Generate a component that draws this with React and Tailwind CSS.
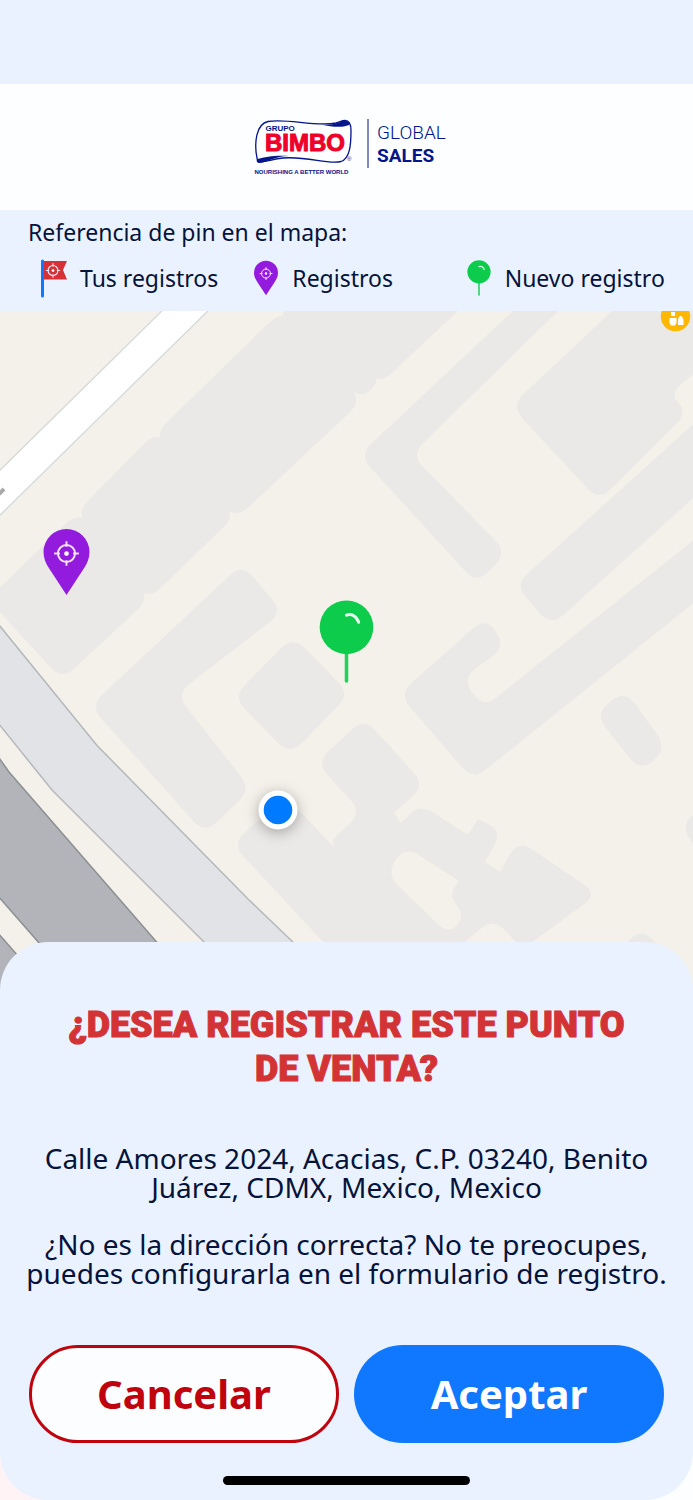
import React from 'react';

// Each corner is [x, y] or [x, y, radius]
const buildings = [
  [[281, 311], [154, 435], [236, 519], [362, 401], [300, 330]],
  [[276, 319], [300, 295], [475, 295], [379, 385], [345, 350], [310, 352]],
  [[300, 340], [361, 400], [382, 378], [330, 320]],
  [[157, 431], [76, 513], [148, 600], [236, 515]],
  [[79, 511], [-12, 599], [62, 680], [150, 598]],
  [[242, 564], [283, 612], [176, 694], [251, 789], [205, 834], [90, 706]],
  [[293, 636], [350, 694], [290, 755], [233, 697]],
  [[513, 311, 0], [359, 455], [477, 584], [507, 552], [411, 455], [558, 311, 0]],
  [[612, 311, 0], [511, 406], [599, 501], [688, 412], [669, 394], [700, 369, 0], [700, 300, 0]],
  [[700, 418, 0], [515, 585], [551, 626], [700, 492, 0]],
  [[700, 535, 0], [483, 708], [462, 678], [506, 647], [486, 617], [399, 694], [473, 780], [700, 598, 0]],
  [[625, 690], [667, 748], [641, 772], [595, 714]],
  [[700, 809, 0], [681, 826], [700, 854, 0]],
  [[641, 928], [662, 950, 0], [620, 950, 0]],
  [[285, 796], [232, 844], [325, 944, 0], [400, 944, 0], [335, 848, 0]],
  [
    [364, 718], [425, 785], [394, 813, 0], [401, 823, 0], [420, 804], [468, 835, 0], [478, 819, 0],
    [502, 831], [485, 862, 0], [500, 872, 0], [518, 840], [598, 894], [531, 943, 0], [516, 942, 0],
    [493, 918], [465, 942, 0], [325, 944, 0], [335, 848, 0], [331, 841, 8], [362, 812], [316, 763],
  ],
];

const courtyard = [[405, 846], [459, 881, 0], [449, 896], [465, 915], [449, 935], [386, 874]];

const roundedPath = (points, defaultRadius = 17) => {
  const commands = points.map(([x, y, radius = defaultRadius], i) => {
    const prev = points[(i + points.length - 1) % points.length];
    const next = points[(i + 1) % points.length];
    const toward = ([px, py]) => {
      const length = Math.hypot(px - x, py - y);
      const t = Math.min(radius, length / 2) / length;
      return `${x + (px - x) * t} ${y + (py - y) * t}`;
    };
    return `${i === 0 ? 'M' : 'L'}${toward(prev)}Q${x} ${y} ${toward(next)}`;
  });
  return `${commands.join('')}Z`;
};

const Target = ({ cx, cy, r }) => (
  <g stroke="#f6e4ff" strokeWidth={r / 5} fill="none">
    <circle cx={cx} cy={cy} r={r * 0.9} />
    <circle cx={cx} cy={cy} r={r * 0.25} fill="#fff" stroke="none" />
    <path
      d={`M${cx} ${cy - r * 1.3}v${r * 0.6}M${cx} ${cy + r * 1.3}v${-r * 0.6}M${cx - r * 1.3} ${cy}h${r * 0.6}M${cx + r * 1.3} ${cy}h${-r * 0.6}`}
    />
  </g>
);

const PurplePin = (props) => (
  <svg viewBox="0 0 46 66" {...props}>
    <path d="M23 66 6 40C2 34 0 29 0 23a23 23 0 0 1 46 0c0 6-2 11-6 17Z" fill="#931bdd" />
    <Target cx={23} cy={24.5} r={9.5} />
  </svg>
);

const GreenPin = (props) => (
  <svg viewBox="0 0 54 82" {...props}>
    <path d="M27 50v30" stroke="#21d15c" strokeWidth="3.500" strokeLinecap="round" />
    <circle cx="27" cy="27" r="26.500" fill="#0dcb4b" />
    <path d="M27 15c5-2 10 1 12 7" stroke="#e8fbee" strokeWidth="3" strokeLinecap="round" fill="none" />
  </svg>
);

const FlagPin = (props) => (
  <svg viewBox="0 0 28 39" {...props}>
    <path d="M3 2h24l-4 9 4 9.500H3Z" fill="#d63235" />
    <path d="M2.500 2v35" stroke="#0f78ff" strokeWidth="3" strokeLinecap="round" />
    <Target cx={13} cy={11.5} r={5.5} />
  </svg>
);

const Logo = () => (
  <svg viewBox="-6 -1 200 60" className="h-[60px] w-[200px]" role="img" aria-label="Grupo Bimbo Global Sales">
    <g fill="none" stroke="#04148b">
      <path
        d="M4 40C1 25 3 6 15 3.500C34 0 62 9 83 5c4-1 6-2.500 9-2.500c4 0 6 4 6 10c0 14-1 28-10 31C75 47 55 38 30 40C18 41 12 45 4.500 43.500Z"
        strokeWidth="1.300"
      />
      <path d="M115 1v49" strokeWidth="1" />
    </g>
    <path d="M68 6.500c10 1 17-1 22-4l5 1c2 1 2 2 1 3.500C88 10 80 9 68 6.500Z" fill="#04148b" />
    <path d="M4 41c9-2 18-4 32-3C22 38 13 45 6 45c-1 0-2-2-2-4Z" fill="#04148b" />
    <g fontFamily="'Liberation Sans', Arial, sans-serif">
      <text x="12.500" y="13" fontSize="8" fontWeight="700" fill="#04148b">GRUPO</text>
      <text x="12" y="33" fontSize="24" fontWeight="700" fill="#ee0028" stroke="#ee0028" strokeWidth="1">BIMBO</text>
      <text x="94" y="43" fontSize="6" fill="#04148b">®</text>
      <text x="1.500" y="56" fontSize="6" fontWeight="700" fill="#04148b">NOURISHING A BETTER WORLD</text>
    </g>
    <g fontFamily="Roboto, sans-serif" fontSize="19" fill="#04148b">
      <text x="124" y="20.500" fontWeight="300">GLOBAL</text>
      <text x="124" y="43.500" fontWeight="700">SALES</text>
    </g>
  </svg>
);

const legend = [
  { label: 'Tus registros', icon: <FlagPin className="h-[39px] w-7" /> },
  { label: 'Registros', icon: <PurplePin className="h-9 w-6" /> },
  { label: 'Nuevo registro', icon: <GreenPin className="h-9 w-6" /> },
];

const StreetMap = () => (
  <svg
    viewBox="0 311 693 681"
    preserveAspectRatio="xMidYMin slice"
    className="absolute inset-0 h-full w-full"
    role="img"
    aria-label="Mapa"
  >
    <rect x="-400" y="311" width="1500" height="1200" fill="#f4f1ea" />
    <g fill="#eae9e7">
      {buildings.map((points, i) => (
        <path key={i} d={roundedPath(points)} />
      ))}
    </g>
    <path d={roundedPath(courtyard)} fill="#f4f1ea" />

    {/* Streets */}
    <path d="M172 301-10 480v45L218 301Z" fill="#fff" stroke="#d9dcdd" strokeWidth="1.500" />
    <path d="M-2 495 4 489" stroke="#a9a9a9" strokeWidth="4" />
    <g strokeWidth="1.500">
      <path d="M-10 614 97 745.500 248 899l95 91h-91L52 790-10 713Z" fill="#e1e3e7" stroke="#b5b8bb" />
      <path d="M-10 745 9 772 200 992H82L-10 887Z" fill="#b2b4b9" stroke="#8d8f93" />
      <path d="M-10 924 60 1004H-10Z" fill="#b2b4b9" stroke="#8d8f93" />
    </g>

    {/* Shop */}
    <circle cx="675.500" cy="316.500" r="14.700" fill="#ffb800" />
    <path d="M671 312h4v4h-4ZM669.500 318h7v5l-1.500 2.500h-4l-1.500-2.500ZM678 325v-4c0-3 1-5 2.500-5s3 2 3 5v4Z" fill="#fff" />

    <PurplePin x="43" y="529" width="47" height="66" />
    <GreenPin x="319" y="600" width="55" height="83" />
    <circle cx="278" cy="810" r="19.500" fill="#fff" className="drop-shadow-[0_3px_7px_rgba(0,0,0,0.3)]" />
    <circle cx="278" cy="810" r="14.300" fill="#007aff" />
  </svg>
);

const ConfirmSheet = () => (
  <section className="relative rounded-[48px] bg-[#eaf2ff] px-[29px] pt-[61px] pb-[15px] text-center">
    <h1 className="mx-auto max-w-[600px] font-[Roboto,sans-serif] text-[36px] leading-[44px] font-black text-[#d33334] [-webkit-text-stroke:1px_#d33334]">
      ¿DESEA REGISTRAR ESTE PUNTO DE VENTA?
    </h1>
    <div className="-mx-4 mt-[53px] space-y-[28px] text-[28px] leading-[29px]">
      <p>Calle Amores 2024, Acacias, C.P. 03240, Benito Juárez, CDMX, Mexico, Mexico</p>
      <p>¿No es la dirección correcta? No te preocupes, puedes configurarla en el formulario de registro.</p>
    </div>
    <div className="mt-[57px] grid grid-cols-2 gap-[15px] text-[40px] leading-[50px] font-bold">
      <button type="button" className="h-[98px] rounded-full border-[3px] border-[#c0040d] bg-[#fcfdff] text-[#c0040d]">
        Cancelar
      </button>
      <button type="button" className="h-[98px] rounded-full bg-[#1077ff] text-white">
        Aceptar
      </button>
    </div>
    <div className="mx-auto mt-[33px] h-[9px] w-[247px] rounded-full bg-black" />
  </section>
);

const App = () => (
  <div className="flex min-h-screen flex-col bg-[#eaf2ff] font-['Noto_Sans',sans-serif] text-[#06133a]">
    <header className="mt-[84px] flex h-[126px] items-center justify-center bg-[#fcfeff]">
      <Logo />
    </header>

    <section className="h-[101px] px-7 pt-[6px]">
      <h2 className="text-[23px] leading-[32px]">Referencia de pin en el mapa:</h2>
      <ul className="mt-[10px] grid grid-cols-3">
        {legend.map(({ label, icon }) => (
          <li key={label} className="flex h-10 items-center text-[23px] leading-[32px] whitespace-nowrap">
            <span className="flex w-[52px] shrink-0 justify-center">{icon}</span>
            {label}
          </li>
        ))}
      </ul>
    </section>

    <main className="flex flex-1 flex-col bg-linear-to-r from-[#fff3f5] to-[#fcfeff]">
      <div className="relative -mb-[50px] min-h-80 flex-1 overflow-hidden">
        <StreetMap />
      </div>
      <ConfirmSheet />
    </main>
  </div>
);

export default App;
